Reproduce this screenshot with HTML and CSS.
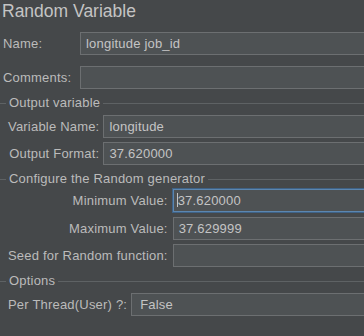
FILE: index.html
```html
<!DOCTYPE html>
<html lang="en">
  <head>
    <meta charset="UTF-8" />
    <meta name="viewport" content="width=device-width, initial-scale=1.0" />
    <title>Random Variable</title>
    <link rel="stylesheet" href="styles.css">
  </head>
  <body>
    <div class="panel">
      <h1 class="title">Random Variable</h1>

      <!-- 이름 / 주석 -->
      <div class="form-top">
        <label>Name:</label>
        <div class="field">longitude job_id</div>
        <label>Comments:</label>
        <div class="field"></div>
      </div>

      <section class="group">
        <div class="group-title"><span>Output variable</span></div>
        <div class="grid">
          <label>Variable Name:</label>
          <div class="field">longitude</div>
          <label>Output Format:</label>
          <div class="field">37.620000</div>
        </div>
      </section>

      <section class="group">
        <div class="group-title"><span>Configure the Random generator</span></div>
        <div class="grid grid-random">
          <label>Minimum Value:</label>
          <div class="field focused"><span class="caret"></span>37.620000</div>
          <label>Maximum Value:</label>
          <div class="field">37.629999</div>
          <label>Seed for Random function:</label>
          <div class="field"></div>
        </div>
      </section>

      <section class="group">
        <div class="group-title"><span>Options</span></div>
        <div class="grid">
          <label>Per Thread(User) ?:</label>
          <div class="field combo">False</div>
        </div>
      </section>
    </div>
  </body>
</html>
```

FILE: styles.css
```css
* {
  box-sizing: border-box;
}

html,
body {
  margin: 0;
  padding: 0;
  overflow: hidden;
}

body {
  background: #45484a;
  color: #bbbbbb;
  font-family: "Liberation Sans", Arial, sans-serif;
  font-size: 13px;
  letter-spacing: 0.2px;
}

.panel {
  width: 480px;
}

.title {
  margin: 0;
  padding-left: 2px;
  height: 22px;
  font-size: 17.5px;
  font-weight: normal;
  line-height: 22px;
  letter-spacing: 0;
  color: #c4c4c4;
}

.form-top {
  display: grid;
  grid-template-columns: 77px 1fr;
  row-gap: 11px;
  align-items: center;
  margin-top: 10px;
  padding-left: 3px;
}

.field {
  height: 23px;
  line-height: 21px;
  padding: 0 5px;
  background: #4e5254;
  border: 1px solid #6c6f71;
  color: #c4c4c4;
  white-space: nowrap;
}

.focused {
  border-color: #5b86b0;
  box-shadow: 0 0 0 1px #3f6286;
  padding-left: 3px;
}

.caret {
  display: inline-block;
  width: 1px;
  height: 14px;
  vertical-align: -2px;
  background: #c4c4c4;
}

.combo {
  padding-left: 8px;
}

/* 그룹 제목 + 선 */
.group {
  margin-top: 6px;
}

.group-title {
  display: flex;
  align-items: center;
  height: 16px;
  line-height: 16px;
}

.group-title::before {
  content: "";
  width: 6px;
  height: 1px;
  margin-right: 3px;
  background: #5e6264;
}

.group-title::after {
  content: "";
  flex: 1;
  height: 1px;
  margin-left: 3px;
  background: #5e6264;
}

.grid {
  display: grid;
  grid-template-columns: auto 1fr;
  column-gap: 4px;
  row-gap: 4px;
  align-items: center;
  margin-top: 4px;
  padding-left: 8px;
}

.grid label {
  justify-self: end;
}

.grid-random {
  margin-top: 2px;
  column-gap: 5px;
}

.grid-random .focused + label + .field {
  margin-top: 1px;
}
```
